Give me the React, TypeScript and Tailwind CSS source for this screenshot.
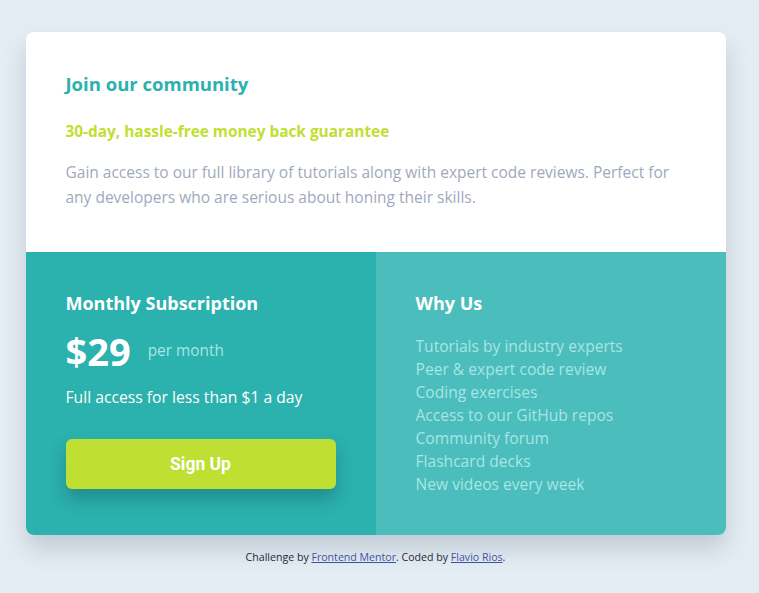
import React from "react";

const items = [
  "Tutorials by industry experts",
  "Peer & expert code review",
  "Coding exercises",
  "Access to our GitHub repos",
  "Community forum",
  "Flashcard decks",
  "New videos every week",
];

export default function App() {
  return (
    <div
      className="min-h-screen bg-[#e5edf4] pt-[32px] pr-[8px] flex flex-col items-center"
      style={{ fontFamily: '"Open Sans", "Liberation Sans", sans-serif' }}
    >
      <div className="w-[700px] rounded-[8px] overflow-hidden shadow-[0_14px_24px_rgba(60,80,100,0.22)]">
        <div className="bg-white h-[220px] px-10 pt-[40px]">
          <h1 className="text-[18.5px] leading-[24px] font-bold text-[#2bb1ae]">Join our community</h1>
          <h2 className="mt-[24px] text-[15.4px] leading-[24px] font-bold text-[#bfe032]">
            30-day, hassle-free money back guarantee
          </h2>
          <p className="mt-[16px] text-[15.5px] leading-[25px] text-[#9fa9bd]">
            Gain access to our full library of tutorials along with expert code reviews. Perfect for any developers who are serious about honing their skills.
          </p>
        </div>
        <div className="grid grid-cols-2 h-[283px]">
          <div className="bg-[#2bb1ae] px-10 pt-[39px]">
            <h3 className="text-[18px] leading-[24px] font-bold text-white">Monthly Subscription</h3>
            <div className="mt-[14px] flex items-center h-[44px]">
              <span className="text-[38px] font-bold text-white leading-[44px]">$29</span>
              <span className="ml-[17px] text-[15.4px] text-[#a7e6e4]">per month</span>
            </div>
            <p className="mt-[12px] text-[15.7px] leading-[24px] text-white">Full access for less than $1 a day</p>
            <button
              className="mt-[30px] w-[270px] h-[50px] rounded-[6px] bg-[#bfe032] text-white text-[17.5px] font-bold shadow-[0_10px_16px_rgba(20,80,80,0.35)]"
              style={{ fontFamily: "Roboto, sans-serif" }}
            >
              Sign Up
            </button>
          </div>
          <div className="bg-[#4bbdbc] px-10 pt-[39px]">
            <h3 className="text-[18px] leading-[24px] font-bold text-white">Why Us</h3>
            <ul className="mt-[20px]">
              {items.map((t) => (
                <li key={t} className="text-[15.6px] leading-[23px] text-[#a7e6e4]">
                  {t}
                </li>
              ))}
            </ul>
          </div>
        </div>
      </div>
      <p className="mt-[14px] text-[10.6px] leading-[16px] text-[#1f2937]">
        Challenge by <a className="underline text-[#3e52a3]" href="#">Frontend Mentor</a>. Coded by{" "}
        <a className="underline text-[#3e52a3]" href="#">Flavio Rios</a>.
      </p>
    </div>
  );
}
